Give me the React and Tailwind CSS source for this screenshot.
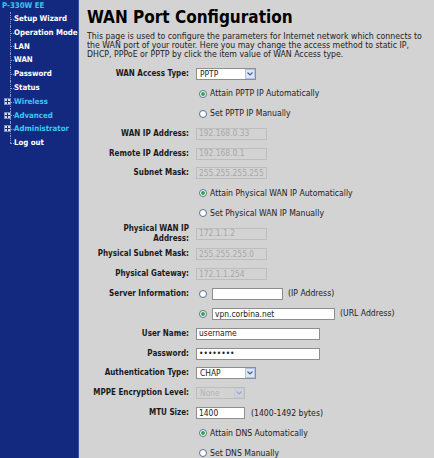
import React from "react";

const navItems = [
  { label: "Setup Wizard" },
  { label: "Operation Mode" },
  { label: "LAN" },
  { label: "WAN" },
  { label: "Password" },
  { label: "Status" },
  { label: "Wireless", folder: true },
  { label: "Advanced", folder: true },
  { label: "Administrator", folder: true },
  { label: "Log out", last: true },
];

function NavRow({ item }) {
  return (
    <div className="flex items-center h-[13.8px]">
      <div className="relative w-[14px] h-full shrink-0">
        <div
          className={
            "absolute left-[10px] top-0 border-l border-dotted border-[#8a9ad0] " +
            (item.last ? "h-1/2" : "h-full")
          }
        />
        <div className="absolute left-[10px] top-1/2 w-[4px] border-t border-dotted border-[#8a9ad0]" />
        {item.folder && (
          <div className="absolute left-[4px] top-[3px] w-[7px] h-[7px] bg-[#d8dcea] border border-[#7d8cc0] flex items-center justify-center">
            <svg width="5" height="5" viewBox="0 0 5 5">
              <path d="M0 2.5h5M2.5 0v5" stroke="#1a2a70" strokeWidth="1" />
            </svg>
          </div>
        )}
      </div>
      <span
        className={
          "text-[7.8px] font-bold leading-none whitespace-nowrap " +
          (item.folder ? "text-[#3cc6f4]" : "text-white")
        }
      >
        {item.label}
      </span>
    </div>
  );
}

function Radio({ checked }) {
  return (
    <span className="inline-flex w-[8px] h-[8px] rounded-full border border-[#5a7090] bg-white items-center justify-center shrink-0">
      {checked && <span className="w-[4px] h-[4px] rounded-full bg-[#2fa84a]" />}
    </span>
  );
}

function TextBox({ value, w, disabled }) {
  return (
    <span
      className={
        "inline-flex items-center h-[12px] px-[2px] text-[8.4px] leading-none border whitespace-nowrap overflow-hidden " +
        (disabled
          ? "bg-[#d3d3d3] border-[#bdbdbd] text-[#a8a8a8]"
          : "bg-white border-[#8e8e8e] text-[#222]")
      }
      style={{ width: w }}
    >
      {value}
    </span>
  );
}

function Select({ value, w, disabled }) {
  return (
    <span
      className={
        "inline-flex items-center h-[12px] border text-[8.4px] leading-none " +
        (disabled ? "bg-[#d3d3d3] border-[#bdbdbd] text-[#b4b4b4]" : "bg-white border-[#8e8e8e] text-[#222]")
      }
      style={{ width: w }}
    >
      <span className="flex-1 px-[3px]">{value}</span>
      <span
        className={
          "w-[10px] h-[10px] mr-[0.5px] flex items-center justify-center border " +
          (disabled ? "bg-[#cdd2dc] border-[#c4c9d4]" : "bg-[#dce6f8] border-[#b0c2e6]")
        }
      >
        <svg width="6" height="4" viewBox="0 0 6 4">
          <path d="M0.5 0.5L3 3L5.5 0.5" fill="none" stroke={disabled ? "#a0a8b8" : "#4d6185"} strokeWidth="1.2" />
        </svg>
      </span>
    </span>
  );
}

function Row({ label, children, h = "h-[19.9px]" }) {
  return (
    <div className={"flex items-center " + h}>
      <div className="w-[102px] text-right text-[8px] font-bold leading-[10px] text-[#1a1a1a]">
        {label}
      </div>
      <div className="ml-[7px] flex items-center gap-[4px] text-[8.6px] text-[#222]">{children}</div>
    </div>
  );
}

function RadioRow({ checked, text }) {
  return (
    <Row label="">
      <span className="ml-[3px] flex items-center gap-[3px]">
        <Radio checked={checked} />
        <span className="whitespace-nowrap">{text}</span>
      </span>
    </Row>
  );
}

export default function App() {
  return (
    <div
      className="flex min-h-screen w-[434px] h-[458px] overflow-hidden bg-[#d3d3d3]"
      style={{ fontFamily: '"DejaVu Sans Condensed", "DejaVu Sans", sans-serif' }}
    >
      <aside className="w-[79px] shrink-0 bg-[#12297f] border-r border-[#3550a8] pt-[1px]">
        <div className="pl-[2px] h-[10px] flex items-center text-[7.8px] font-bold text-[#3cc6f4] leading-none">
          P-330W EE
        </div>
        <div className="pt-[1px]">
          {navItems.map((it) => (
            <NavRow key={it.label} item={it} />
          ))}
        </div>
      </aside>

      <main className="flex-1 pl-[8px] pt-[7px] text-[#111]">
        <h1 className="text-[17px] font-bold leading-[20px] text-black">WAN Port Configuration</h1>
        <p className="mt-[5px] text-[8.7px] leading-[9px] text-[#222] pr-[4px]">
          This page is used to configure the parameters for Internet network which connects to the
          WAN port of your router. Here you may change the access method to static IP, DHCP, PPPoE
          or PPTP by click the item value of WAN Access type.
        </p>

        <div className="mt-[5px]">
          <Row label="WAN Access Type:">
            <Select value="PPTP" w="60px" />
          </Row>
          <RadioRow checked text="Attain PPTP IP Automatically" />
          <RadioRow text="Set PPTP IP Manually" />
          <Row label="WAN IP Address:">
            <TextBox value="192.168.0.33" w="71px" disabled />
          </Row>
          <Row label="Remote IP Address:">
            <TextBox value="192.168.0.1" w="71px" disabled />
          </Row>
          <Row label="Subnet Mask:">
            <TextBox value="255.255.255.255" w="71px" disabled />
          </Row>
          <RadioRow checked text="Attain Physical WAN IP Automatically" />
          <RadioRow text="Set Physical WAN IP Manually" />
          <Row label="Physical WAN IP Address:" h="h-[21px]">
            <TextBox value="172.1.1.2" w="71px" disabled />
          </Row>
          <Row label="Physical Subnet Mask:">
            <TextBox value="255.255.255.0" w="71px" disabled />
          </Row>
          <Row label="Physical Gateway:">
            <TextBox value="172.1.1.254" w="71px" disabled />
          </Row>
          <Row label="Server Information:">
            <span className="ml-[3px] flex items-center gap-[5px]">
              <Radio />
              <TextBox value="" w="71px" />
              <span className="whitespace-nowrap">(IP Address)</span>
            </span>
          </Row>
          <Row label="">
            <span className="ml-[3px] flex items-center gap-[5px]">
              <Radio checked />
              <TextBox value="vpn.corbina.net" w="123px" />
              <span className="whitespace-nowrap">(URL Address)</span>
            </span>
          </Row>
          <Row label="User Name:">
            <TextBox value="username" w="124px" />
          </Row>
          <Row label="Password:">
            <TextBox value="••••••••" w="124px" />
          </Row>
          <Row label="Authentication Type:">
            <Select value="CHAP" w="60px" />
          </Row>
          <Row label="MPPE Encryption Level:">
            <Select value="None" w="49px" disabled />
          </Row>
          <Row label="MTU Size:">
            <TextBox value="1400" w="49px" />
            <span className="ml-[2px] whitespace-nowrap">(1400-1492 bytes)</span>
          </Row>
          <RadioRow checked text="Attain DNS Automatically" />
          <RadioRow text="Set DNS Manually" />
        </div>
      </main>
    </div>
  );
}
